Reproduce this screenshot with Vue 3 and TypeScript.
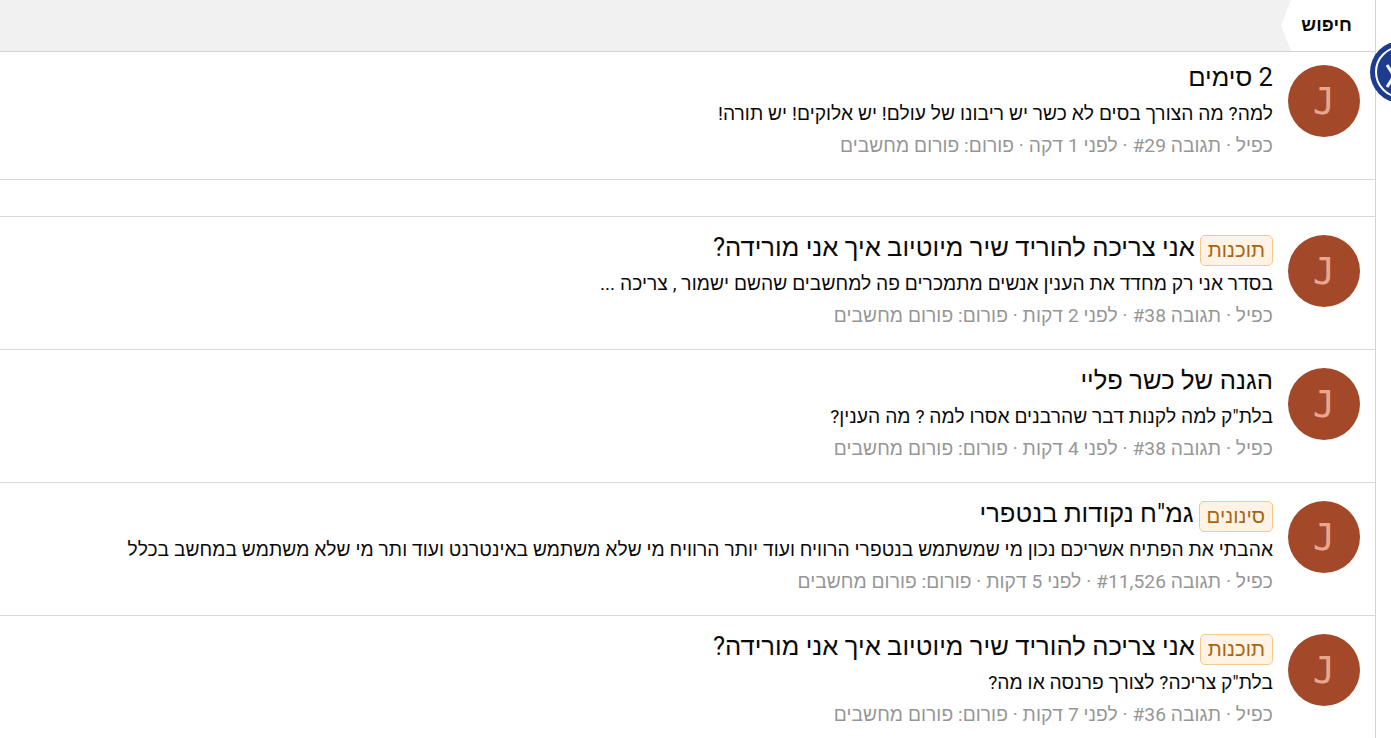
<script setup lang="ts">
interface Post {
  id: number;
  title: string;
  tag?: string;
  body: string;
  meta: string;
}

const posts: Post[] = [
  { id: 1, title: "2 סימים", body: "למה? מה הצורך בסים לא כשר יש ריבונו של עולם! יש אלוקים! יש תורה!", meta: "כפיל · תגובה ‎#29 · לפני 1 דקה · פורום: פורום מחשבים" },
  { id: 2, title: "אני צריכה להוריד שיר מיוטיוב איך אני מורידה?", tag: "תוכנות", body: "בסדר אני רק מחדד את הענין אנשים מתמכרים פה למחשבים שהשם ישמור , צריכה ...", meta: "כפיל · תגובה ‎#38 · לפני 2 דקות · פורום: פורום מחשבים" },
  { id: 3, title: "הגנה של כשר פליי", body: "בלת\"ק למה לקנות דבר שהרבנים אסרו למה ? מה הענין?", meta: "כפיל · תגובה ‎#38 · לפני 4 דקות · פורום: פורום מחשבים" },
  { id: 4, title: "גמ\"ח נקודות בנטפרי", tag: "סינונים", body: "אהבתי את הפתיח אשריכם נכון מי שמשתמש בנטפרי הרוויח ועוד יותר הרוויח מי שלא משתמש באינטרנט ועוד ותר מי שלא משתמש במחשב בכלל", meta: "כפיל · תגובה ‎#11,526 · לפני 5 דקות · פורום: פורום מחשבים" },
  { id: 5, title: "אני צריכה להוריד שיר מיוטיוב איך אני מורידה?", tag: "תוכנות", body: "בלת\"ק צריכה? לצורך פרנסה או מה?", meta: "כפיל · תגובה ‎#36 · לפני 7 דקות · פורום: פורום מחשבים" },
];
</script>

<template>
  <div class="page" dir="rtl">
    <div class="panel">
      <header class="bar">
        <div class="tab">חיפוש</div>
      </header>
      <ul class="list">
        <template v-for="(post, i) in posts" :key="post.id">
          <li class="row">
            <div class="avatar">J</div>
            <div class="content">
              <div class="title">
                <span v-if="post.tag" class="tag">{{ post.tag }}</span>
                <span class="title-text">{{ post.title }}</span>
              </div>
              <div class="body">{{ post.body }}</div>
              <div class="meta">{{ post.meta }}</div>
            </div>
          </li>
          <li v-if="i === 0" class="spacer"></li>
        </template>
      </ul>
    </div>
    <div class="badge">
      <svg width="62" height="62" viewBox="0 0 62 62">
        <circle cx="31" cy="31" r="31" fill="#1d3c8f" />
        <circle cx="31" cy="31" r="25" fill="none" stroke="#fff" stroke-width="2" />
        <path d="M17 24l7 11-7 11M24 35l12-11M24 35l12 11" fill="none" stroke="#fff" stroke-width="3" />
      </svg>
    </div>
  </div>
</template>

<style scoped>
.page {
  position: relative;
  height: 738px;
  overflow: hidden;
  background: #fff;
  font-family: Roboto, "Noto Sans", "Liberation Sans", sans-serif;
  letter-spacing: 0.06px;
}
.panel {
  width: 1376px;
  height: 738px;
  box-sizing: border-box;
  border-right: 1px solid #d3d3d3;
  margin-right: 15px;
  overflow: hidden;
}
.bar {
  display: flex;
  height: 52px;
  box-sizing: border-box;
  background: #f1f1f1;
  border-bottom: 1px solid #d3d3d3;
}
.tab {
  display: flex;
  align-items: center;
  width: 94px;
  padding: 0 23px 2px 0;
  box-sizing: border-box;
  background: #fff;
  font-size: 18.4px;
  font-weight: 700;
  color: #0a0a0a;
  clip-path: polygon(0 0, 100% 0, 100% 100%, 10px 100%, 0 50%, 10px 0);
}
.list {
  list-style: none;
  margin: 0;
  padding: 0;
}
.row {
  display: flex;
  gap: 15px;
  padding: 18px 15px 0 0;
  height: 133px;
  box-sizing: border-box;
  border-bottom: 1px solid #d8d8d8;
}
.row:first-child {
  padding-top: 13px;
  height: 128px;
}
.spacer {
  height: 37px;
  box-sizing: border-box;
  border-bottom: 1px solid #d8d8d8;
}
.avatar {
  flex: none;
  display: flex;
  align-items: center;
  justify-content: center;
  width: 72px;
  height: 72px;
  border-radius: 50%;
  background: #a3492a;
  color: #e9a58d;
  font-family: "DejaVu Sans Mono", monospace;
  font-size: 37px;
  letter-spacing: 0;
}
.content {
  min-width: 0;
}
.title {
  display: flex;
  align-items: flex-start;
  gap: 5px;
  height: 28px;
  font-size: 25.6px;
  color: #0a0a0a;
  white-space: nowrap;
  letter-spacing: 0.02px;
}
.title-text {
  line-height: 24px;
}
.tag {
  display: inline-block;
  padding: 0 7px;
  height: 31px;
  box-sizing: border-box;
  line-height: 29px;
  border: 1px solid #f7c78c;
  border-radius: 5px;
  background: #fff3e5;
  color: #a8660f;
  font-size: 20.3px;
}
.body {
  margin-top: 8px;
  font-size: 19.2px;
  line-height: 25px;
  color: #0a0a0a;
  white-space: nowrap;
}
.meta {
  margin-top: 7px;
  font-size: 19.2px;
  line-height: 25px;
  color: #969696;
  white-space: nowrap;
}
.badge {
  position: absolute;
  top: 41px;
  left: 1370px;
  width: 62px;
  height: 62px;
}
</style>

<style>
html, body {
  margin: 0;
  overflow: hidden;
}
</style>
